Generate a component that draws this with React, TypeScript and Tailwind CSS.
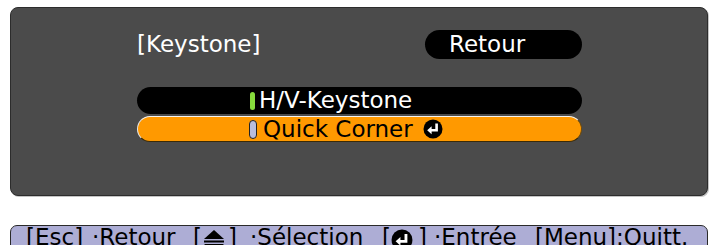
import React from "react";

function EnterIcon({ size = 20 }: { size?: number }) {
  return (
    <svg width={size} height={size} viewBox="0 0 20 20" className="block">
      <circle cx="10" cy="10" r="9.5" fill="#000" />
      <path d="M13.6 4.5 V11.2 H8" stroke="#fff" strokeWidth="2.6" fill="none" />
      <path d="M4.2 11.2 L8.6 7.2 V15.2 Z" fill="#fff" />
    </svg>
  );
}

function UpDownIcon() {
  return (
    <svg width="22" height="24" viewBox="0 0 22 24" className="block">
      <path d="M11 1 L21 10 H1 Z" fill="#000" />
      <rect x="1" y="11.5" width="20" height="2" fill="#000" />
      <path d="M1 15 H21 L11 24 Z" fill="#000" />
    </svg>
  );
}

export default function App() {
  return (
    <div className="w-[712px] h-[245px] bg-white overflow-hidden flex flex-col font-['DejaVu_Sans',sans-serif]">
      <div className="ml-[10px] mt-[7px] w-[698px] h-[189px] shrink-0 rounded-[8px] bg-[#4b4b4b] border border-[#2c2c2c] shadow-[1px_1px_0_#c4c4c4] pl-[126px] pt-[22px] flex flex-col">
        <div className="flex items-center h-[29px]">
          <div className="w-[288px] text-white text-[23px] leading-none">[Keystone]</div>
          <div className="w-[157px] h-[29px] rounded-full bg-black text-white text-[23px] leading-none flex items-center pl-[24px]">
            Retour
          </div>
        </div>
        <div className="mt-[28px] w-[445px] h-[27px] rounded-full bg-black text-white text-[23px] leading-none flex items-center pl-[113px]">
          <span className="w-[5px] h-[18px] rounded-full bg-[#86dc3c] mr-[4px] shrink-0" />
          H/V-Keystone
        </div>
        <div className="mt-[2px] w-[445px] h-[26px] rounded-full bg-[#ff9900] border border-t-[#f4f4f4] border-l-[#e8e8e8] border-r-[#6a4a10] border-b-[#3a2a08] text-black text-[23px] leading-none flex items-center pl-[111px]">
          <span className="w-[8px] h-[19px] rounded-full bg-[#b9bddc] border border-[#222] mr-[6px] shrink-0" />
          Quick Corner
          <span className="ml-[10px] flex items-center">
            <EnterIcon size={20} />
          </span>
        </div>
      </div>
      <div className="ml-[10px] mt-[29px] w-[698px] h-[34px] shrink-0 rounded-t-[7px] bg-[#adadd5] border border-[#2a2a2a] flex items-start pt-[1px] pl-[15px] text-black text-[23px] leading-[20px] whitespace-nowrap">
        <span className="w-[66px] shrink-0">[Esc]</span>
        <span className="w-[101px] shrink-0">·Retour</span>
        <span className="w-[57px] shrink-0 flex items-start">
          [<span className="ml-[1px] mr-[3px] mt-[2px]"><UpDownIcon /></span>]
        </span>
        <span className="w-[132px] shrink-0">·Sélection</span>
        <span className="w-[52px] shrink-0 flex items-start">
          [<span className="mr-[5px] mt-[2px]"><EnterIcon size={22} /></span>]
        </span>
        <span className="w-[101px] shrink-0">·Entrée</span>
        <span className="shrink-0">[Menu]:Quitt.</span>
      </div>
    </div>
  );
}
